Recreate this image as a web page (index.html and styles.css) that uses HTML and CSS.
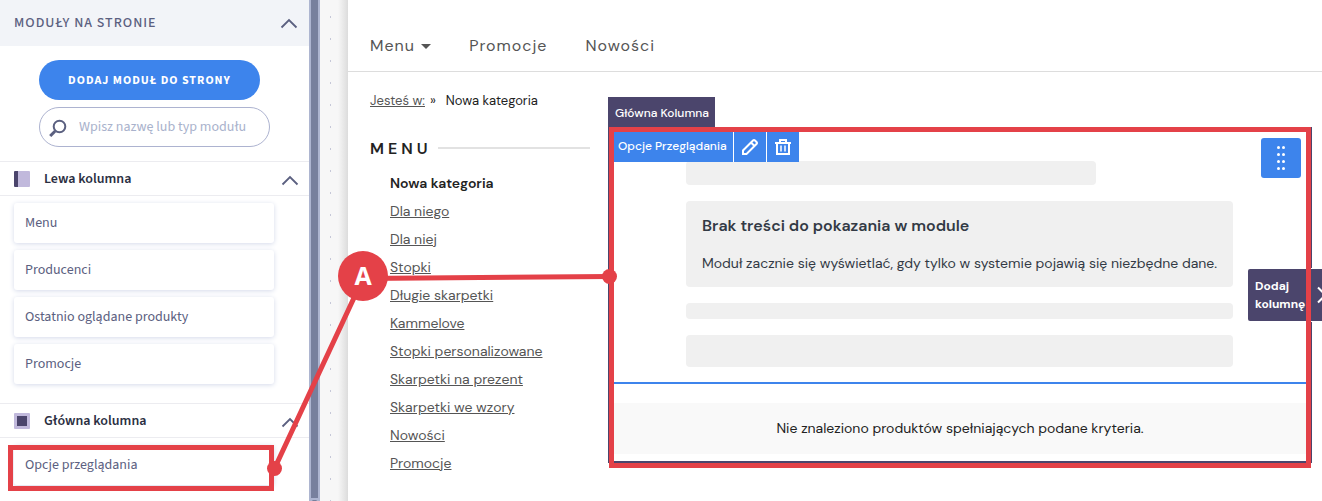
FILE: index.html
```html
<!DOCTYPE html>
<html lang="pl">
<head>
  <meta charset="UTF-8" />
  <meta name="viewport" content="width=device-width, initial-scale=1.0"/>
  <title>Moduły na stronie</title>
  <link rel="stylesheet" href="styles.css">
</head>
<body>
  <aside class="sidebar">
    <header class="sidebar-header">
      <h1>Moduły na stronie</h1>
      <button class="toggle" aria-label="Zwiń moduły">
        <svg width="18" height="11" viewBox="0 0 18 11"><path d="M1.5 9.5 9 2l7.5 7.5"/></svg>
      </button>
    </header>
    <div class="sidebar-tools">
      <button class="add-btn">Dodaj moduł do strony</button>
      <label class="search">
        <svg width="18" height="18" viewBox="0 0 18 18"><circle cx="10.5" cy="7.5" r="5.8"/><path d="M6.2 12 1.2 17"/></svg>
        <input type="text" placeholder="Wpisz nazwę lub typ modułu" aria-label="Szukaj modułu">
      </label>
    </div>
    <section class="group">
      <header class="group-header">
        <span class="col-icon left"></span>
        <h2>Lewa kolumna</h2>
        <button class="toggle" aria-label="Zwiń lewą kolumnę">
          <svg width="18" height="11" viewBox="0 0 18 11"><path d="M1.5 9.5 9 2l7.5 7.5"/></svg>
        </button>
      </header>
      <ul class="modules">
        <li>Menu</li>
        <li>Producenci</li>
        <li>Ostatnio oglądane produkty</li>
        <li>Promocje</li>
      </ul>
    </section>
    <section class="group">
      <header class="group-header">
        <span class="col-icon main"></span>
        <h2>Główna kolumna</h2>
        <button class="toggle" aria-label="Zwiń główną kolumnę">
          <svg width="18" height="11" viewBox="0 0 18 11"><path d="M1.5 9.5 9 2l7.5 7.5"/></svg>
        </button>
      </header>
      <ul class="modules">
        <li class="marked">Opcje przeglądania</li>
      </ul>
    </section>
  </aside>
  <div class="scrollbar">
    <div class="thumb"></div>
    <svg width="7" height="6" viewBox="0 0 7 6"><path d="M1 2h5L3.5 5z"/></svg>
  </div>
  <div class="gutter"></div>

  <main class="page">
    <nav class="top-nav">
      <a href="#">Menu <span class="caret"></span></a>
      <a href="#">Promocje</a>
      <a href="#">Nowości</a>
    </nav>
    <div class="breadcrumbs">
      <a href="#">Jesteś w:</a><span>»</span><span class="current">Nowa kategoria</span>
    </div>
    <div class="columns">
      <div class="left-column">
        <h2 class="menu-title">MENU</h2>
        <ul class="menu">
          <li><strong>Nowa kategoria</strong></li>
          <li><a href="#">Dla niego</a></li>
          <li><a href="#">Dla niej</a></li>
          <li><a href="#">Stopki</a></li>
          <li><a href="#">Długie skarpetki</a></li>
          <li><a href="#">Kammelove</a></li>
          <li><a href="#">Stopki personalizowane</a></li>
          <li><a href="#">Skarpetki na prezent</a></li>
          <li><a href="#">Skarpetki we wzory</a></li>
          <li><a href="#">Nowości</a></li>
          <li><a href="#">Promocje</a></li>
        </ul>
      </div>
      <div class="main-column">
        <span class="column-label">Główna Kolumna</span>
        <div class="module">
          <div class="module-bar">
            <span>Opcje Przeglądania</span>
            <button aria-label="Edytuj">
              <svg width="18" height="18" viewBox="0 0 18 18"><path d="M2 16v-3.5L12 2.5q1-1 2 0L15.5 4q1 1 0 2L5.5 16zM10 4.5l3.5 3.5"/></svg>
            </button>
            <button aria-label="Usuń">
              <svg width="18" height="18" viewBox="0 0 18 18"><path d="M1 5h16M6 4V2h6v2M3 5v11h12V5"/><path class="bars" d="M7 7.5v6M11 7.5v6"/></svg>
            </button>
          </div>
          <button class="drag" aria-label="Przesuń">
            <svg width="10" height="26" viewBox="0 0 10 26">
              <circle cx="2.5" cy="2.5" r="1.5"/><circle cx="7.5" cy="2.5" r="1.5"/>
              <circle cx="2.5" cy="9.5" r="1.5"/><circle cx="7.5" cy="9.5" r="1.5"/>
              <circle cx="2.5" cy="16.5" r="1.5"/><circle cx="7.5" cy="16.5" r="1.5"/>
              <circle cx="2.5" cy="23.5" r="1.5"/><circle cx="7.5" cy="23.5" r="1.5"/>
            </svg>
          </button>
          <div class="block short"></div>
          <div class="block notice">
            <h3>Brak treści do pokazania w module</h3>
            <p>Moduł zacznie się wyświetlać, gdy tylko w systemie pojawią się niezbędne dane.</p>
          </div>
          <div class="block thin"></div>
          <div class="block"></div>
        </div>
        <p class="empty">Nie znaleziono produktów spełniających podane kryteria.</p>
      </div>
    </div>
    <button class="add-column">
      <span>Dodaj kolumnę</span>
      <svg width="10" height="18" viewBox="0 0 10 18"><path d="M1 1.5 8.5 9 1 16.5"/></svg>
    </button>
    <div class="frame"></div>
  </main>

  <svg class="callout" width="640" height="501" viewBox="0 0 640 501">
    <path d="M274.5 468.5 363 278.5 609.5 276.5"/>
    <circle cx="274.5" cy="468.5" r="7.5"/>
    <circle cx="609.5" cy="276.5" r="7.5"/>
    <circle cx="363" cy="276" r="25"/>
    <text x="363" y="285">A</text>
  </svg>
</body>
</html>
```
FILE: styles.css
```css
* {
  box-sizing: border-box;
}
body {
  margin: 0;
  min-height: 100vh;
  display: flex;
  position: relative;
  overflow: hidden;
  background: #fff;
  color: #222;
  font-family: 'DM Sans', Inter, sans-serif;
  font-size: 14px;
}
h1, h2, h3, p, ul {
  margin: 0;
  padding: 0;
}
ul {
  list-style: none;
}
button {
  border: none;
  padding: 0;
  font-family: inherit;
  cursor: pointer;
}
svg {
  display: block;
  fill: none;
}

/* sidebar */
.sidebar {
  width: 309px;
  flex-shrink: 0;
  font-family: 'Source Sans 3', 'Noto Sans CJK SC', 'Noto Sans', sans-serif;
  color: #5b6080;
}
.sidebar-header {
  display: flex;
  align-items: center;
  justify-content: space-between;
  height: 46px;
  padding: 0 11px 0 14px;
  background: #f2f4f8;
}
.sidebar-header h1 {
  font-size: 14px;
  font-weight: 500;
  letter-spacing: 1px;
  text-transform: uppercase;
}
.toggle {
  background: none;
}
.toggle svg {
  stroke: #5b6080;
  stroke-width: 1.8;
}
.sidebar-tools {
  display: flex;
  flex-direction: column;
  gap: 7px;
  padding: 14px 39px;
}
.add-btn {
  width: 221px;
  height: 40px;
  border-radius: 20px;
  background: #3d84ec;
  color: #fff;
  font-size: 12px;
  font-weight: bold;
  letter-spacing: 1px;
  text-transform: uppercase;
}
.search {
  display: flex;
  align-items: center;
  gap: 12px;
  height: 40px;
  padding: 0 10px 0 9px;
  border: 1px solid #adb3d0;
  border-radius: 20px;
}
.search svg {
  flex-shrink: 0;
  margin-top: 2px;
  stroke: #5b6080;
  stroke-width: 2;
}
.search path {
  stroke-width: 3;
}
.search input {
  width: 100%;
  min-width: 0;
  border: none;
  padding: 0;
  outline: none;
  background: none;
  font-family: inherit;
  font-size: 14px;
}
.search input::placeholder {
  color: #a9b2cc;
}
.group-header {
  display: flex;
  align-items: center;
  height: 35px;
  padding: 0 10px 0 14px;
  border-top: 1px solid #ececf0;
  border-bottom: 1px solid #ececf0;
}
.group-header h2 {
  flex: 1;
  margin-left: 14px;
  color: #2b2f42;
  font-size: 14px;
  font-weight: 600;
}
.group-header .toggle {
  padding-top: 3px;
}
.col-icon {
  width: 16px;
  height: 16px;
  border-radius: 1px;
  background: #c1b9dc;
}
.col-icon.left {
  border-left: 4px solid #4b456c;
}
.col-icon.main {
  border: 3px solid #c1b9dc;
  background: #4b456c;
}
.modules {
  display: flex;
  flex-direction: column;
  gap: 7px;
  padding: 7px 35px 19px 14px;
}
.modules li {
  position: relative;
  display: flex;
  align-items: center;
  height: 40px;
  padding-left: 11px;
  border-radius: 3px;
  box-shadow: 0 1px 5px #d4d9ea;
  font-size: 14px;
}
.marked::after {
  content: '';
  position: absolute;
  inset: 0 0 -6px -6px;
  border: 5px solid #e44148;
}

.scrollbar {
  display: flex;
  flex-direction: column;
  width: 11px;
  flex-shrink: 0;
  padding: 0 2px;
  background: #adb5d0;
}
.scrollbar .thumb {
  flex: 1;
  background: #77809d;
}
.scrollbar svg {
  fill: #77809d;
}
.gutter {
  width: 28px;
  flex-shrink: 0;
  background:
    linear-gradient(#c6c8d8 2px, transparent 2px) 10px 16px / 1px 22px repeat-y,
    linear-gradient(90deg, transparent 18px, #dcdcdc 28px),
    #f7f7f7;
}

/* shop page */
.page {
  position: relative;
  flex: 1;
  min-width: 0;
}
.page a {
  color: #555;
}
.top-nav {
  display: flex;
  align-items: center;
  gap: 38px;
  height: 72px;
  padding: 20px 22px 0;
  border-bottom: 1px solid #ddd;
}
.top-nav a {
  font-size: 16px;
  letter-spacing: 1px;
  text-decoration: none;
}
.caret {
  display: inline-block;
  margin-left: 1px;
  border: 5px solid transparent;
  border-top-color: #555;
  border-bottom: none;
  vertical-align: middle;
}
.breadcrumbs {
  display: flex;
  gap: 5px;
  height: 55px;
  padding: 19px 22px 0;
  font-size: 13px;
  line-height: 20px;
}
.breadcrumbs .current {
  margin-left: 5px;
}
.columns {
  display: flex;
  align-items: flex-start;
  gap: 18px;
  padding: 0 10px 0 22px;
}
.left-column {
  width: 220px;
  flex-shrink: 0;
}
.menu-title {
  display: flex;
  align-items: center;
  gap: 6px;
  height: 42px;
  font-size: 16px;
  font-weight: 600;
  letter-spacing: 4px;
}
.menu-title::after {
  content: '';
  flex: 1;
  height: 2px;
  background: #e2e2e2;
}
.menu {
  padding-left: 20px;
  line-height: 28px;
}
.menu strong {
  font-weight: 600;
}
.main-column {
  position: relative;
  flex: 1;
  min-width: 0;
  padding: 5px 0 7px;
  border: 1px solid #4b456c;
  border-width: 0 1px 2px;
}
.column-label {
  position: absolute;
  left: -1px;
  bottom: 100%;
  height: 30px;
  padding: 0 6px 0 7px;
  background: #4b456c;
  color: #fff;
  font-size: 12px;
  font-weight: 500;
  line-height: 32px;
}
.module {
  position: relative;
  display: flex;
  flex-direction: column;
  gap: 16px;
  padding: 29px 78px 15px 77px;
  border-bottom: 2px solid #3d84ec;
}
.module-bar {
  position: absolute;
  top: 0;
  left: 5px;
  display: flex;
  gap: 1px;
  height: 30px;
  background: #fff;
  color: #fff;
  font-size: 12px;
  font-weight: 500;
  line-height: 28px;
}
.module-bar span {
  padding: 0 6px 0 4px;
  background: #3d84ec;
}
.module-bar button {
  width: 32px;
  padding: 0 7px;
  background: #3d84ec;
}
.module-bar svg {
  stroke: #fff;
  stroke-width: 2;
}
.module-bar .bars {
  stroke-width: 1.5;
}
.drag {
  position: absolute;
  top: 6px;
  right: 10px;
  width: 40px;
  height: 40px;
  border-radius: 3px;
  background: #3d84ec;
}
.drag svg {
  margin: auto;
  fill: #fff;
}
.block {
  height: 32px;
  border-radius: 4px;
  background: #f0f0f0;
}
.block.short {
  width: 75%;
  height: 24px;
}
.block.thin {
  height: 16px;
}
.notice {
  height: auto;
  padding: 12px 8px 12px 16px;
  color: #333a45;
}
.notice h3 {
  margin-bottom: 12px;
  font-size: 16px;
  font-weight: 600;
  line-height: 26px;
}
.notice p {
  font-size: 14px;
  line-height: 24px;
}
.empty {
  margin-top: 19px;
  background: #f9f9f9;
  font-size: 14px;
  line-height: 51px;
  text-align: center;
}
.add-column {
  position: absolute;
  top: 269px;
  right: 0;
  display: flex;
  align-items: center;
  gap: 11px;
  width: 74px;
  height: 52px;
  padding-left: 7px;
  border-radius: 2px 0 0 2px;
  box-shadow: 0 0 0 1px #fff;
  overflow: hidden;
  background: #4b456c;
  color: #fff;
  font-size: 12px;
  font-weight: bold;
  line-height: 18px;
  text-align: left;
}
.add-column span {
  width: 51px;
  flex-shrink: 0;
}
.add-column svg {
  flex-shrink: 0;
  stroke: #fff;
  stroke-width: 2;
}

/* red marks over the page */
.frame {
  position: absolute;
  top: 127px;
  left: 261px;
  right: 11px;
  height: 341px;
  border: 5px solid #e44148;
  pointer-events: none;
}
.callout {
  position: absolute;
  top: 0;
  left: 0;
  pointer-events: none;
}
.callout path {
  stroke: #e44148;
  stroke-width: 5;
}
.callout circle {
  fill: #e44148;
}
.callout text {
  fill: #fff;
  font-family: 'Open Sans', sans-serif;
  font-size: 25px;
  font-weight: bold;
  text-anchor: middle;
}
```
